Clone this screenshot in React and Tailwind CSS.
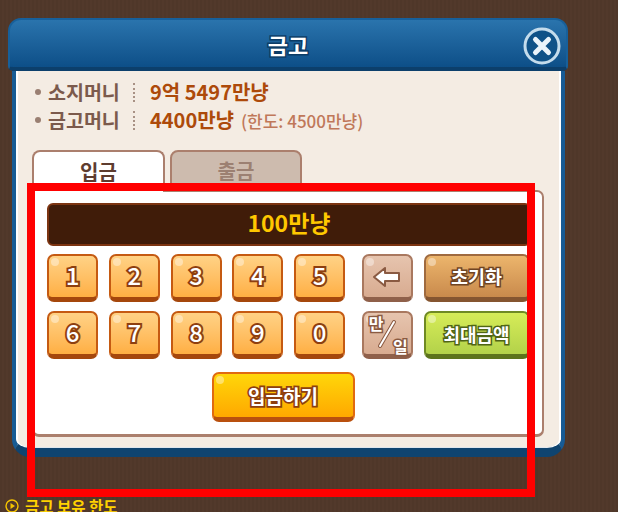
import React from 'react';

const font = { fontFamily: '"Noto Sans CJK KR", "Noto Sans", sans-serif' };

const variants = {
  orange:
    'bg-linear-to-b from-[#ffd285] to-[#ffaf42] border-[#c55a12] border-b-[#a5470c]',
  tan: 'bg-linear-to-b from-[#e6c4ae] to-[#d8ab90] border-[#a9785f] border-b-[#8f604a]',
  brown:
    'bg-linear-to-b from-[#ecb56c] to-[#c98a4c] border-[#9f6a3f] border-b-[#855530]',
  green:
    'bg-linear-to-b from-[#d6ec58] to-[#b3d24a] border-[#6f8a24] border-b-[#5c731c]',
  yellow:
    'bg-linear-to-b from-[#ffd60a] to-[#ffa800] border-[#e06a10] border-b-[#b9500e]',
};

function Key({ variant = 'orange', className = '', children }) {
  return (
    <button
      className={`relative flex items-center justify-center rounded-[7px] border-2 border-b-[5px] ${variants[variant]} ${className}`}
    >
      <span className="absolute left-[2px] top-[2px] h-[8px] w-[8px] rounded-full bg-white/40"></span>
      {children}
    </button>
  );
}

function Digit({ value }) {
  return (
    <Key className="h-[48px] w-[51px] pb-[3px]">
      <span className="text-[24px] leading-none font-medium text-white [-webkit-text-stroke:4px_#8e3f0f] [paint-order:stroke_fill]">
        {value}
      </span>
    </Key>
  );
}

function InfoRow({ label, children }) {
  return (
    <div className="flex h-[28px] items-center">
      <span className="ml-[3px] h-[6px] w-[6px] rounded-full bg-[#9a7f72]"></span>
      <span className="ml-[7px] w-[76px] text-[19.5px] leading-none font-bold whitespace-nowrap text-[#7b5a4c]">
        {label}
      </span>
      <span className="ml-[9px] h-[19px] w-0 border-l-2 border-dotted border-[#a89184]"></span>
      <div className="ml-[15px] flex items-center">{children}</div>
    </div>
  );
}

export default function App() {
  return (
    <div
      style={font}
      className="relative flex h-[512px] w-[618px] flex-col overflow-hidden bg-[repeating-linear-gradient(90deg,#4f3729_0px,#4f3729_2px,#52392b_2px,#52392b_4px)]"
    >
      {/* window */}
      <div className="ml-[8px] mt-[18px] w-[560px]">
        <div className="relative z-10 flex h-[53px] items-center justify-center rounded-t-[13px] rounded-b-[5px] border-2 border-b-4 border-[#17609b] border-b-[#0c3f6b] bg-linear-to-b from-[#2a74ad] to-[#0d4f88]">
          <span className="text-[22px] leading-none font-bold text-white [-webkit-text-stroke:3px_#0c3c66] [paint-order:stroke_fill]">
            금고
          </span>
          <svg
            className="absolute right-[5px] top-[7px]"
            width="38"
            height="38"
            viewBox="0 0 38 38"
          >
            <circle cx="19" cy="19" r="17" fill="#0f5288" stroke="#c4dcec" strokeWidth="3" />
            <path
              d="M12.5 12.5 L25.5 25.5 M25.5 12.5 L12.5 25.5"
              stroke="#eaf4fb"
              strokeWidth="5"
              strokeLinecap="round"
            />
          </svg>
        </div>

        <div className="ml-[4px] h-[386px] w-[553px] rounded-b-[18px] border-x-[4px] border-b-[9px] border-x-[#175b94] border-b-[#0f4470] bg-[#f4ece3] shadow-[inset_2px_0_0_#fff,inset_-2px_0_0_#fff,inset_0_-1px_0_#dfe6ee]">
          <div className="pl-[16px] pt-[7px]">
            <InfoRow label="소지머니">
              <span className="text-[20px] leading-none font-bold text-[#ad4a0a]">9억 5497만냥</span>
            </InfoRow>
            <InfoRow label="금고머니">
              <span className="text-[20px] leading-none font-bold text-[#ad4a0a]">4400만냥</span>
              <span className="ml-[7px] text-[17px] leading-none font-medium text-[#c0785a]">
                (한도: 4500만냥)
              </span>
            </InfoRow>
          </div>

          {/* tabs */}
          <div className="ml-[16px] mt-[16px] flex gap-[5px]">
            <div className="relative z-10 -mb-[2px] flex h-[42px] w-[133px] items-center justify-center rounded-t-[8px] border-2 border-b-0 border-[#ab7f6d] bg-white text-[20px] font-bold text-[#5e3c2f]">
              입금
            </div>
            <div className="flex h-[40px] w-[132px] items-center justify-center rounded-t-[8px] border-2 border-[#ab7f6d] bg-[#cdbbae] pt-[2px] text-[20px] font-bold text-[#9c8072]">
              출금
            </div>
          </div>

          {/* panel */}
          <div className="ml-[16px] flex h-[247px] w-[512px] flex-col rounded-[7px] rounded-tl-none border-2 border-b-[3px] border-[#ab7f6d] bg-white pl-[13px] pt-[11px]">
            <div className="flex h-[43px] w-[484px] items-center justify-center rounded-[6px] border-2 border-[#7c3411] bg-[#401c09] pb-[4px]">
              <span className="text-[23px] leading-none font-bold text-[#ffc800]">100만냥</span>
            </div>

            <div className="mt-[8px] flex gap-[10.75px]">
              {[1, 2, 3, 4, 5].map((n) => (
                <Digit key={n} value={n} />
              ))}
              <Key variant="tan" className="ml-[6px] h-[48px] w-[51px]">
                <svg width="30" height="22" viewBox="0 0 30 22">
                  <path
                    d="M2 11 L13 2 V7 H27 V15 H13 V20 Z"
                    fill="#fff"
                    stroke="#8a5a42"
                    strokeWidth="2"
                    strokeLinejoin="round"
                  />
                </svg>
              </Key>
              <Key variant="brown" className="h-[48px] w-[106px]">
                <span className="text-[18.5px] leading-none font-bold text-white [-webkit-text-stroke:3px_#6f4423] [paint-order:stroke_fill]">
                  초기화
                </span>
              </Key>
            </div>

            <div className="mt-[9px] flex gap-[10.75px]">
              {[6, 7, 8, 9, 0].map((n) => (
                <Digit key={n} value={n} />
              ))}
              <Key variant="tan" className="ml-[6px] h-[48px] w-[51px]">
                <span className="absolute left-[5px] top-[2px] text-[16px] leading-none font-bold text-white [-webkit-text-stroke:3px_#8a5a42] [paint-order:stroke_fill]">
                  만
                </span>
                <svg width="24" height="30" viewBox="0 0 24 30">
                  <path d="M19 3 L5 27" stroke="#8a5a42" strokeWidth="4" strokeLinecap="round" />
                  <path d="M19 3 L5 27" stroke="#fff" strokeWidth="2" strokeLinecap="round" />
                </svg>
                <span className="absolute bottom-0 right-[3px] text-[16px] leading-none font-bold text-white [-webkit-text-stroke:3px_#8a5a42] [paint-order:stroke_fill]">
                  일
                </span>
              </Key>
              <Key variant="green" className="h-[48px] w-[106px]">
                <span className="text-[18px] leading-none font-bold text-white [-webkit-text-stroke:3px_#4f6516] [paint-order:stroke_fill]">
                  최대금액
                </span>
              </Key>
            </div>

            <div className="mt-[13px] flex w-[472px] justify-center">
              <Key variant="yellow" className="h-[50px] w-[143px]">
                <span className="text-[19px] leading-none font-bold text-white [-webkit-text-stroke:3.5px_#8e3f0f] [paint-order:stroke_fill]">
                  입금하기
                </span>
              </Key>
            </div>
          </div>
        </div>
      </div>

      {/* footer note, cut by the bottom edge as in the reference */}
      <div className="ml-[5px] mt-[41px] flex items-center gap-[6px]">
        <svg width="14" height="14" viewBox="0 0 14 14">
          <circle cx="7" cy="7" r="6" fill="none" stroke="#f5c400" strokeWidth="1.4" />
          <path d="M5.5 4 L10 7 L5.5 10 Z" fill="#f5c400" />
        </svg>
        <span className="text-[15.5px] leading-[16px] font-bold text-[#ffd200]">금고 보유 한도</span>
      </div>

      {/* red highlight drawn over the screenshot */}
      <div className="pointer-events-none absolute left-[27px] top-[183px] z-20 h-[314px] w-[508px] border-8 border-[#ff0000]"></div>
    </div>
  );
}
